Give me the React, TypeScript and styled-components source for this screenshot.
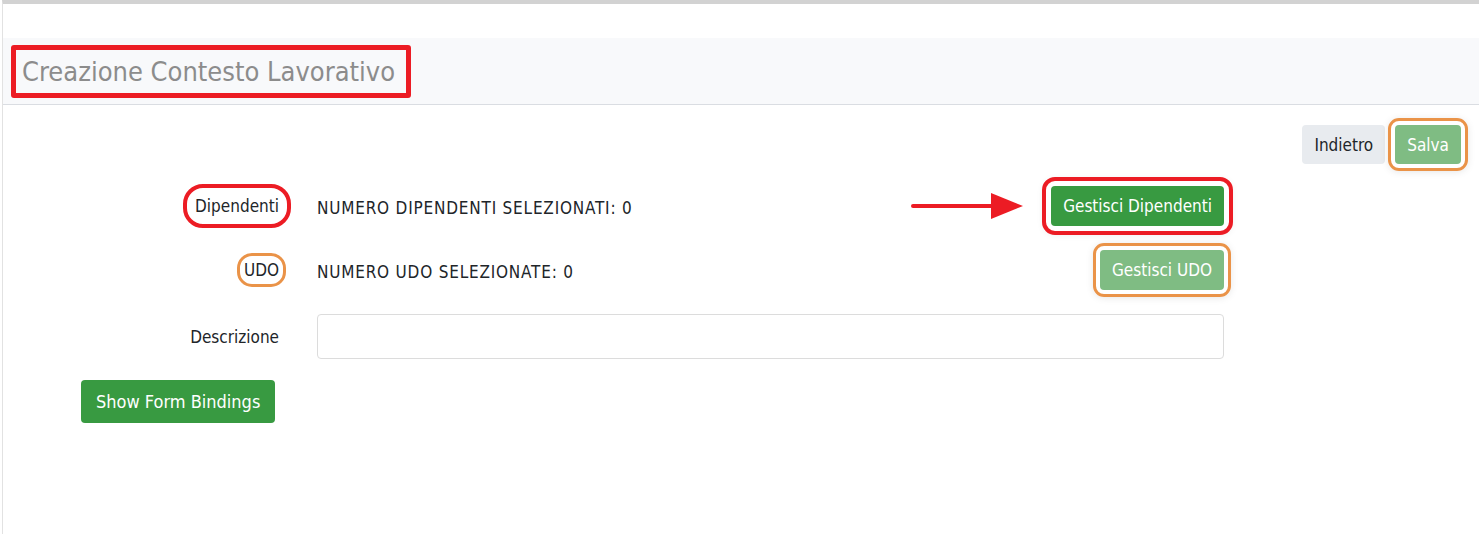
import styled, { createGlobalStyle } from 'styled-components';

const GlobalStyle = createGlobalStyle`
  html, body {
    margin: 0;
    padding: 0;
    background: #fff;
  }
  body {
    font-family: "DejaVu Sans Condensed", "DejaVu Sans", Tahoma, sans-serif;
    color: #212529;
  }
`;

const Page = styled.div`
  min-height: 530px;
  border-top: 4px solid #d2d2d2;
  margin-left: 2px;
  border-left: 1px solid #e2e2e2;
`;

const HeaderBand = styled.div`
  margin-top: 34px;
  height: 66px;
  background: #f8f9fb;
  border-bottom: 1px solid #dadde2;
  display: flex;
  align-items: center;
  padding-left: 8px;
`;

const TitleBox = styled.div`
  border: 5px solid #ec1c24;
  border-radius: 3px;
  padding: 0 11px 0 6px;
  height: 43px;
  display: flex;
  align-items: center;
`;

const Title = styled.h1`
  margin: 0;
  font-size: 27px;
  font-weight: normal;
  color: #8c8c8c;
`;

const Toolbar = styled.div`
  display: flex;
  justify-content: flex-end;
  gap: 10px;
  padding: 20px 18px 0 0;
`;

const Button = styled.button<{ $variant: 'light' | 'success' | 'muted'; $ring?: 'red' | 'orange' }>`
  font-family: inherit;
  font-size: 17px;
  border: none;
  border-radius: 4px;
  height: 39px;
  padding: 0 12px;
  cursor: pointer;
  color: ${(p) => (p.$variant === 'light' ? '#212529' : '#fff')};
  background: ${(p) =>
    p.$variant === 'light' ? '#e8ebef' : p.$variant === 'success' ? '#389a41' : '#7fbc83'};
  outline: ${(p) =>
    p.$ring === 'red' ? '4px solid #ec1c24' : p.$ring === 'orange' ? '3px solid #ea9348' : 'none'};
  outline-offset: ${(p) => (p.$ring === 'red' ? '5px' : '4px')};
  box-shadow: ${(p) => (p.$ring ? '0 0 0 7px #fff, 0 1px 8px 6px rgba(0,0,0,0.12)' : 'none')};
`;

const Form = styled.div`
  width: 1221px;
  display: grid;
  grid-template-columns: 276px 1fr;
  column-gap: 38px;
  row-gap: 24px;
  margin-top: 22px;
  align-items: center;
`;

const Label = styled.div`
  text-align: right;
  font-size: 17px;
`;

const Marked = styled.span<{ $ring: 'red' | 'orange' }>`
  display: inline-block;
  line-height: 20px;
  border-radius: 8px;
  outline: ${(p) => (p.$ring === 'red' ? '4px solid #ec1c24' : '3px solid #ea9348')};
  outline-offset: ${(p) => (p.$ring === 'red' ? '8px' : '4px')};
`;

const Value = styled.div`
  display: flex;
  align-items: center;
  justify-content: space-between;
  height: 40px;
`;

const Count = styled.span`
  font-size: 17px;
  letter-spacing: 0.8px;
  padding-top: 3px;
`;

const Action = styled.div`
  display: flex;
  align-items: center;
  gap: 28px;
`;

const TallButton = styled(Button)`
  height: 40px;
`;

const Input = styled.input`
  height: 45px;
  box-sizing: border-box;
  border: 1px solid #dcdcdc;
  border-radius: 4px;
  font-family: inherit;
  font-size: 16px;
  padding: 0 12px;
`;

const BindingsButton = styled.button`
  margin: 21px 0 0 78px;
  height: 43px;
  padding: 0 15px;
  border: none;
  border-radius: 4px;
  background: #389a41;
  color: #fff;
  font-family: inherit;
  font-size: 18px;
`;

const Arrow = () => (
  <svg width="112" height="28" viewBox="0 0 112 28">
    <line x1="2" y1="14" x2="84" y2="14" stroke="#ec1c24" strokeWidth="4" strokeLinecap="round" />
    <polygon points="80,1 112,14 80,27" fill="#ec1c24" />
  </svg>
);

const App = () => (
  <>
    <GlobalStyle />
    <Page>
      <HeaderBand>
        <TitleBox>
          <Title>Creazione Contesto Lavorativo</Title>
        </TitleBox>
      </HeaderBand>
      <Toolbar>
        <Button $variant="light">Indietro</Button>
        <Button $variant="muted" $ring="orange">Salva</Button>
      </Toolbar>
      <Form>
        <Label>
          <Marked $ring="red">Dipendenti</Marked>
        </Label>
        <Value>
          <Count>NUMERO DIPENDENTI SELEZIONATI: 0</Count>
          <Action>
            <Arrow />
            <TallButton $variant="success" $ring="red">Gestisci Dipendenti</TallButton>
          </Action>
        </Value>
        <Label>
          <Marked $ring="orange">UDO</Marked>
        </Label>
        <Value>
          <Count>NUMERO UDO SELEZIONATE: 0</Count>
          <TallButton $variant="muted" $ring="orange">Gestisci UDO</TallButton>
        </Value>
        <Label>Descrizione</Label>
        <Input type="text" />
      </Form>
      <BindingsButton>Show Form Bindings</BindingsButton>
    </Page>
  </>
);

export default App;
